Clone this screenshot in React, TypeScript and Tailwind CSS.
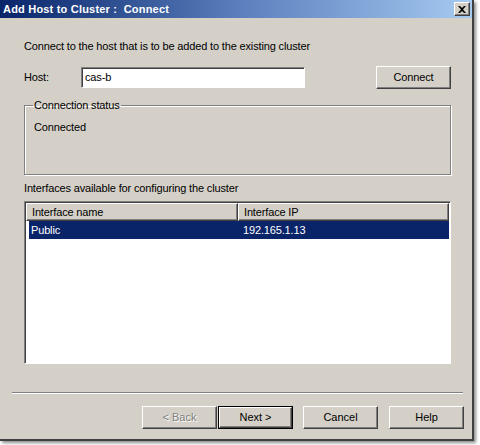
import type { ReactNode } from "react";

const raised =
  "border border-t-white border-l-white border-r-[#404040] border-b-[#404040] shadow-[inset_-1px_-1px_0_#808080]";
const sunken =
  "border border-t-[#808080] border-l-[#808080] border-r-white border-b-white shadow-[inset_1px_1px_0_#404040]";

const Button = ({
  children,
  disabled,
  primary,
}: {
  children: ReactNode;
  disabled?: boolean;
  primary?: boolean;
}) => (
  <button
    disabled={disabled}
    className={
      primary
        ? "w-[75px] h-[23px] border border-black bg-[#d4d0c8] flex"
        : `w-[75px] h-[23px] bg-[#d4d0c8] ${raised} flex items-center justify-center ${
            disabled ? "text-[#808080] [text-shadow:1px_1px_0_#fff]" : "text-black"
          }`
    }
  >
    {primary ? (
      <span className={`flex-1 ${raised} flex items-center justify-center text-black`}>
        {children}
      </span>
    ) : (
      children
    )}
  </button>
);

export default function App() {
  return (
    <div className="w-[480px] h-[445px] bg-white font-['Liberation_Sans',Arial,sans-serif] text-[11px] leading-[13px] text-black">
      <div className="w-[474px] h-[441px] bg-[#d4d0c8] flex flex-col border-r-2 border-b-2 border-[#404040] shadow-[2px_2px_3px_rgba(0,0,0,0.45)]">
        {/* caption */}
        <div className="h-[18px] shrink-0 flex items-center justify-between pl-[3px] pr-[2px] bg-gradient-to-r from-[#0a246a] via-[#5a7ebc] to-[#a6caf0]">
          <span className="text-white font-bold text-[11px] tracking-[0.2px] whitespace-pre">
            Add Host to Cluster :  Connect
          </span>
          <span className={`w-[16px] h-[14px] bg-[#d4d0c8] ${raised} flex items-center justify-center`}>
            <svg width="8" height="7" viewBox="0 0 8 7">
              <path d="M0 0h2l2 2 2-2h2L5 3.5 8 7H6L4 5 2 7H0l3-3.5z" fill="#000" />
            </svg>
          </span>
        </div>

        <div className="pl-[24px] w-[451px] pt-[22px] flex flex-col tracking-[-0.15px]">
          <p>Connect to the host that is to be added to the existing cluster</p>

          <div className="mt-[13px] flex items-center h-[23px]">
            <span className="w-[57px]">Host:</span>
            <div className={`w-[224px] h-[21px] bg-white ${sunken} flex items-center pl-[3px]`}>
              cas-b
            </div>
            <div className="ml-auto">
              <Button>Connect</Button>
            </div>
          </div>

          <fieldset className="mt-[10px] h-[76px] border border-[#808080] shadow-[inset_1px_1px_0_#fff,1px_1px_0_#fff] px-[9px] pb-0">
            <legend className="px-[1px] -ml-[1px]">Connection status</legend>
            <p className="mt-[9px]">Connected</p>
          </fieldset>

          <p className="mt-[7px]">Interfaces available for configuring the cluster</p>

          <div className={`mt-[6px] h-[163px] bg-white ${sunken} p-[1px] flex flex-col`}>
            <div className="flex h-[18px] shrink-0">
              <div className={`w-[212px] bg-[#d4d0c8] ${raised} pl-[5px] flex items-center`}>
                Interface name
              </div>
              <div className={`flex-1 bg-[#d4d0c8] ${raised} pl-[5px] flex items-center`}>
                Interface IP
              </div>
            </div>
            <div className="pl-[3px]">
              <div className="flex h-[18px] items-center bg-[#0a246a] text-white">
                <span className="w-[209px] pl-[2px]">Public</span>
                <span className="pl-[5px]">192.165.1.13</span>
              </div>
            </div>
          </div>
        </div>

        {/* separator */}
        <div className="ml-[12px] w-[451px] mt-[28px] h-[2px] border-t border-[#808080] border-b border-b-white" />

        <div className="mt-[12px] ml-[142px] flex items-center">
          <Button disabled>&lt; Back</Button>
          <div className="ml-px">
            <Button primary>Next &gt;</Button>
          </div>
          <div className="ml-[10px]">
            <Button>Cancel</Button>
          </div>
          <div className="ml-[11px]">
            <Button>Help</Button>
          </div>
        </div>
      </div>
    </div>
  );
}
